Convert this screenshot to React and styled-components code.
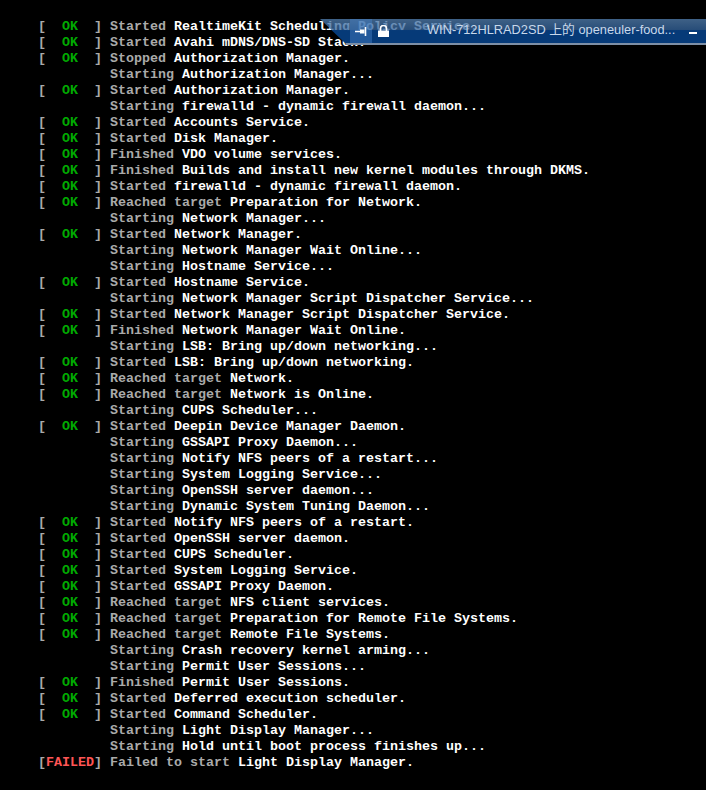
import React from 'react'
import styled, { createGlobalStyle } from 'styled-components'

const GlobalStyle = createGlobalStyle`
  html, body {
    margin: 0;
    padding: 0;
    background: #000;
  }
`

const OK = 'ok'
const FAILED = 'failed'

// status, verb, rest
const lines = [
  [OK, 'Started', 'RealtimeKit Scheduling Policy Service.'],
  [OK, 'Started', 'Avahi mDNS/DNS-SD Stack.'],
  [OK, 'Stopped', 'Authorization Manager.'],
  [null, 'Starting', 'Authorization Manager...'],
  [OK, 'Started', 'Authorization Manager.'],
  [null, 'Starting', 'firewalld - dynamic firewall daemon...'],
  [OK, 'Started', 'Accounts Service.'],
  [OK, 'Started', 'Disk Manager.'],
  [OK, 'Finished', 'VDO volume services.'],
  [OK, 'Finished', 'Builds and install new kernel modules through DKMS.'],
  [OK, 'Started', 'firewalld - dynamic firewall daemon.'],
  [OK, 'Reached target', 'Preparation for Network.'],
  [null, 'Starting', 'Network Manager...'],
  [OK, 'Started', 'Network Manager.'],
  [null, 'Starting', 'Network Manager Wait Online...'],
  [null, 'Starting', 'Hostname Service...'],
  [OK, 'Started', 'Hostname Service.'],
  [null, 'Starting', 'Network Manager Script Dispatcher Service...'],
  [OK, 'Started', 'Network Manager Script Dispatcher Service.'],
  [OK, 'Finished', 'Network Manager Wait Online.'],
  [null, 'Starting', 'LSB: Bring up/down networking...'],
  [OK, 'Started', 'LSB: Bring up/down networking.'],
  [OK, 'Reached target', 'Network.'],
  [OK, 'Reached target', 'Network is Online.'],
  [null, 'Starting', 'CUPS Scheduler...'],
  [OK, 'Started', 'Deepin Device Manager Daemon.'],
  [null, 'Starting', 'GSSAPI Proxy Daemon...'],
  [null, 'Starting', 'Notify NFS peers of a restart...'],
  [null, 'Starting', 'System Logging Service...'],
  [null, 'Starting', 'OpenSSH server daemon...'],
  [null, 'Starting', 'Dynamic System Tuning Daemon...'],
  [OK, 'Started', 'Notify NFS peers of a restart.'],
  [OK, 'Started', 'OpenSSH server daemon.'],
  [OK, 'Started', 'CUPS Scheduler.'],
  [OK, 'Started', 'System Logging Service.'],
  [OK, 'Started', 'GSSAPI Proxy Daemon.'],
  [OK, 'Reached target', 'NFS client services.'],
  [OK, 'Reached target', 'Preparation for Remote File Systems.'],
  [OK, 'Reached target', 'Remote File Systems.'],
  [null, 'Starting', 'Crash recovery kernel arming...'],
  [null, 'Starting', 'Permit User Sessions...'],
  [OK, 'Finished', 'Permit User Sessions.'],
  [OK, 'Started', 'Deferred execution scheduler.'],
  [OK, 'Started', 'Command Scheduler.'],
  [null, 'Starting', 'Light Display Manager...'],
  [null, 'Starting', 'Hold until boot process finishes up...'],
  [FAILED, 'Failed to start', 'Light Display Manager.'],
]

export default function App() {
  return (
    <Screen>
      <GlobalStyle />
      <Console>
        {lines.map(([status, verb, rest], i) => (
          <Line key={i}>
            <Status>
              {status === OK && (
                <>
                  <Bracket>[</Bracket>
                  <Ok>  OK  </Ok>
                  <Bracket>]</Bracket>
                </>
              )}
              {status === FAILED && (
                <>
                  <Bracket>[</Bracket>
                  <Failed>FAILED</Failed>
                  <Bracket>]</Bracket>
                </>
              )}
            </Status>
            <Verb>{verb}</Verb> <Unit>{rest}</Unit>
          </Line>
        ))}
      </Console>
      <TitleBar>
        <PinButton>
          <svg width="12" height="9" viewBox="0 0 12 9">
            <path d="M0 4.5h8M10.5 0v9" stroke="#fff" strokeWidth="1.6" fill="none" />
            <rect x="5" y="2.5" width="4.5" height="4" fill="#fff" />
          </svg>
        </PinButton>
        <LockIcon>
          <svg width="11" height="12" viewBox="0 0 11 12">
            <path d="M2.5 6V3.5a3 3 0 0 1 6 0V6" stroke="#fff" strokeWidth="1.6" fill="none" />
            <rect x="0" y="5.5" width="11" height="6.5" fill="#fff" />
          </svg>
        </LockIcon>
        <Title>WIN-712HLRAD2SD 上的 openeuler-food...</Title>
        <Minimize />
      </TitleBar>
    </Screen>
  )
}

const Screen = styled.div`
  position: relative;
  width: 706px;
  height: 790px;
  overflow: hidden;
  background: #000;
`

const Console = styled.div`
  padding: 19px 0 0 38px;
  font-family: 'Liberation Mono', monospace;
  font-size: 13.33px;
  font-weight: 700;
  line-height: 16px;
  color: #fff;
  white-space: pre;
`

const Line = styled.div`
  height: 16px;
`

const Status = styled.span`
  display: inline-block;
  width: 72px;
`

const Bracket = styled.span`
  color: #aaa;
`

const Ok = styled.span`
  color: #0a0;
`

const Failed = styled.span`
  color: #f55;
`

const Verb = styled.span`
  color: #aaa;
`

const Unit = styled.span`
  color: #fff;
`

const TitleBar = styled.div`
  position: absolute;
  top: 19px;
  right: 0;
  width: 386px;
  height: 26px;
  box-sizing: border-box;
  display: flex;
  align-items: center;
  clip-path: polygon(0 0, 100% 0, 100% 100%, 27px 100%);
  background: linear-gradient(
    rgba(80, 124, 172, 0.78),
    rgba(50, 98, 154, 0.78) 46%,
    #063a78 48%,
    #063a78
  );
  border-bottom: 2px solid #7d8fa6;
`

const PinButton = styled.div`
  width: 22px;
  height: 24px;
  margin-left: 30px;
  display: flex;
  align-items: center;
  justify-content: center;
  background: rgba(70, 130, 200, 0.45);
`

const LockIcon = styled.div`
  margin-left: 6px;
  display: flex;
`

const Title = styled.div`
  margin-left: 38px;
  margin-top: -2px;
  flex: 1;
  font-family: 'Liberation Sans', 'Noto Sans CJK SC', sans-serif;
  font-size: 12.8px;
  line-height: 24px;
  color: #c8d8ea;
`

const Minimize = styled.div`
  width: 8px;
  height: 2px;
  margin: 4px 9px 0 0;
  background: #fff;
`
